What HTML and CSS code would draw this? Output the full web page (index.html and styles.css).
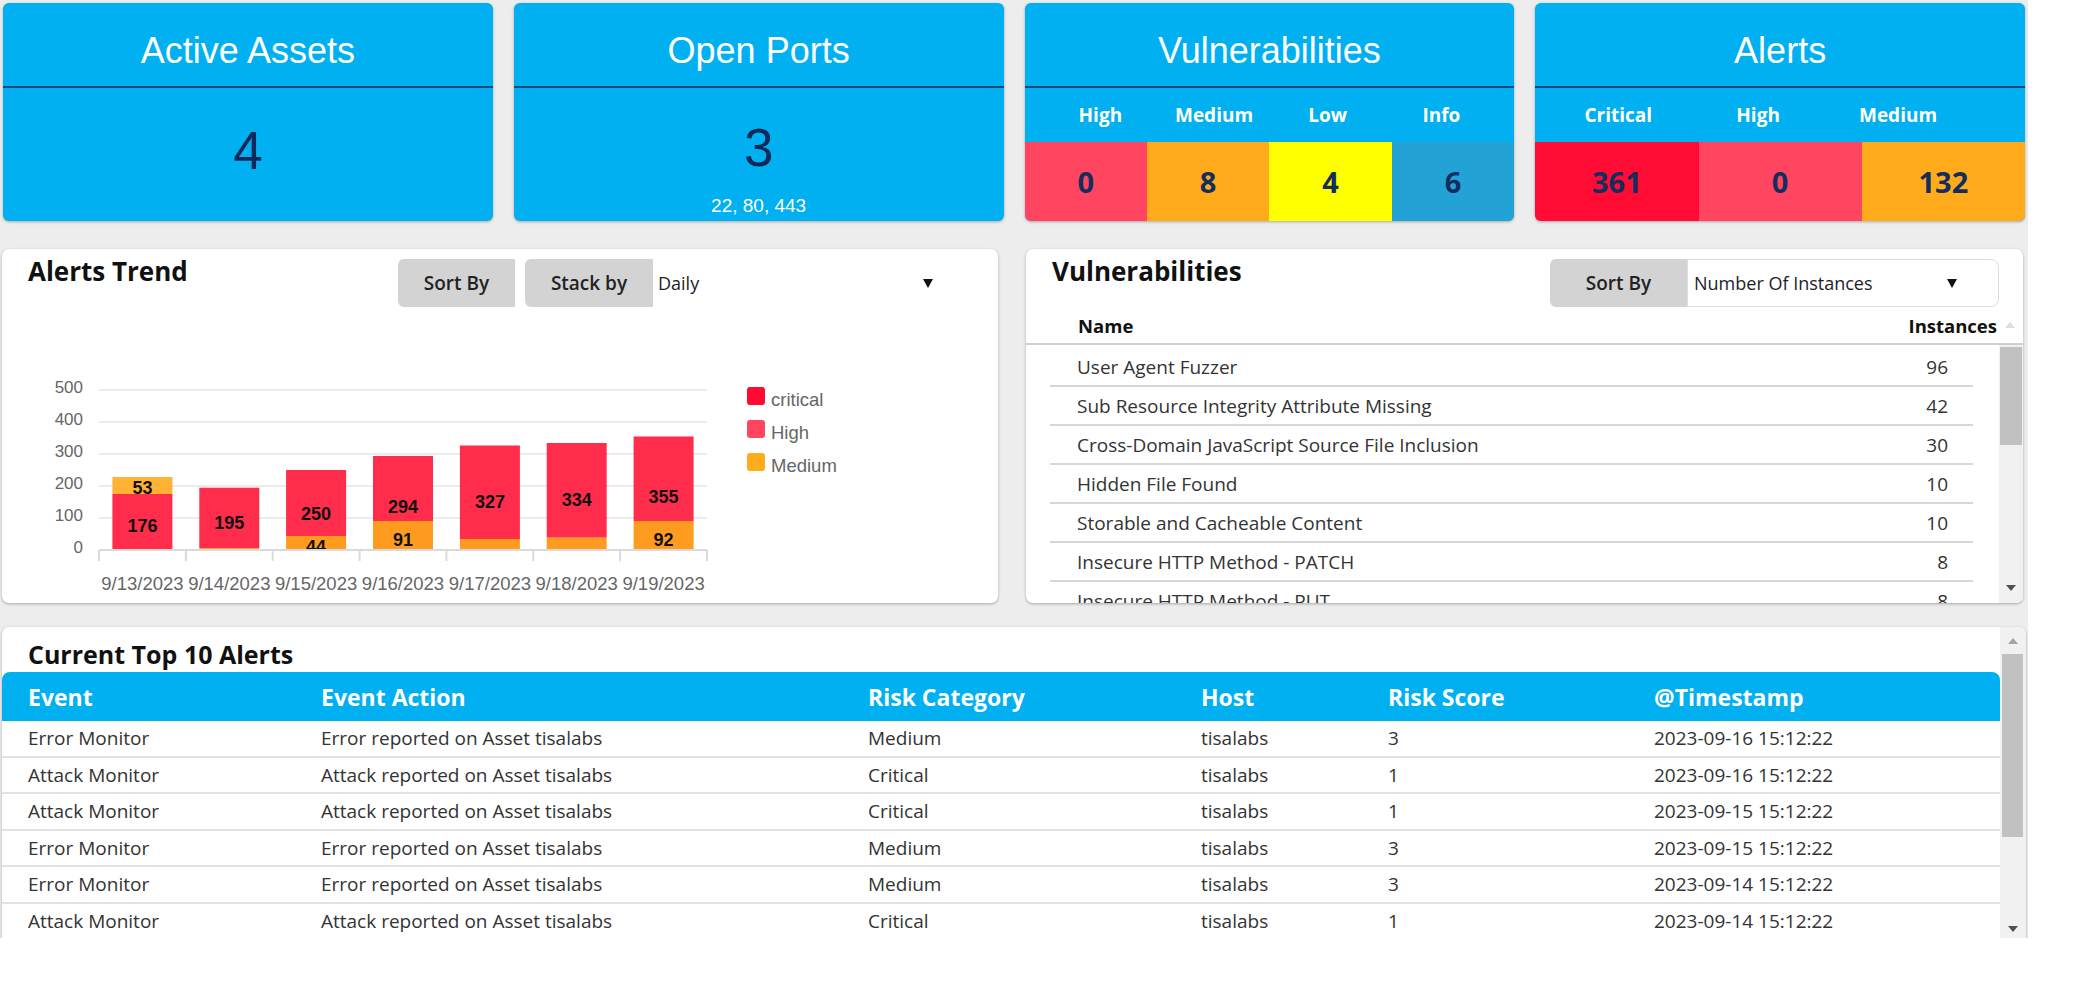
FILE: index.html
```html
<!DOCTYPE html>
<html>
<head>
<meta charset="utf-8">
<link rel="stylesheet" href="styles.css">
</head>
<body>
<div class="dash">
  <div class="cards">
    <div class="card">
      <div class="card-title">Active Assets</div>
      <div class="card-body body-assets"><div class="big">4</div></div>
    </div>
    <div class="card">
      <div class="card-title">Open Ports</div>
      <div class="card-body body-ports"><div class="big">3</div><div class="ports">22, 80, 443</div></div>
    </div>
    <div class="card">
      <div class="card-title">Vulnerabilities</div>
      <div class="sev-head four-h"><span>High</span><span>Medium</span><span>Low</span><span>Info</span></div>
      <div class="sev-cells four">
        <div class="c-high">0</div><div class="c-med">8</div><div class="c-low">4</div><div class="c-info">6</div>
      </div>
    </div>
    <div class="card">
      <div class="card-title">Alerts</div>
      <div class="sev-head three-h"><span>Critical</span><span>High</span><span>Medium</span></div>
      <div class="sev-cells three">
        <div class="c-crit">361</div><div class="c-high">0</div><div class="c-med">132</div>
      </div>
    </div>
  </div>

  <div class="mid">
    <section class="panel chart-panel">
      <div class="panel-head">
        <div class="panel-title">Alerts Trend</div>
        <div class="controls">
          <div class="btn btn-sort">Sort By</div>
          <div class="btn btn-stack">Stack by</div>
          <div class="select select-daily"><span>Daily</span><svg class="caret" width="10" height="9" viewBox="0 0 10 9"><polygon points="0,0 10,0 5,9"/></svg></div>
        </div>
      </div>
      <svg class="chart" width="996" height="296" viewBox="0 0 996 296">
        <defs><clipPath id="plot"><rect x="97" y="0" width="608" height="243"/></clipPath></defs>
        <g class="grid">
          <line x1="97" y1="83" x2="705" y2="83"/>
          <line x1="97" y1="115" x2="705" y2="115"/>
          <line x1="97" y1="147" x2="705" y2="147"/>
          <line x1="97" y1="179" x2="705" y2="179"/>
          <line x1="97" y1="211" x2="705" y2="211"/>
        </g>
        <g class="ylab">
          <text x="81" y="80">500</text>
          <text x="81" y="112">400</text>
          <text x="81" y="144">300</text>
          <text x="81" y="176">200</text>
          <text x="81" y="208">100</text>
          <text x="81" y="240">0</text>
        </g>
        <g clip-path="url(#plot)">
          <rect class="b-red" x="110.4" y="187" width="60" height="56"/>
          <rect class="b-org2" x="110.4" y="170" width="60" height="17"/>
          <rect class="b-red" x="197.3" y="180.7" width="60" height="60.3"/>
          <rect class="b-org" x="197.3" y="241" width="60" height="2"/>
          <rect class="b-red" x="284.1" y="163" width="60" height="66"/>
          <rect class="b-org" x="284.1" y="229" width="60" height="14"/>
          <rect class="b-red" x="371" y="149" width="60" height="65"/>
          <rect class="b-org" x="371" y="214" width="60" height="29"/>
          <rect class="b-red" x="457.9" y="138.5" width="60" height="93.5"/>
          <rect class="b-org" x="457.9" y="232" width="60" height="11"/>
          <rect class="b-red" x="544.7" y="136" width="60" height="94.7"/>
          <rect class="b-org" x="544.7" y="230.7" width="60" height="12.3"/>
          <rect class="b-red" x="631.6" y="129.5" width="60" height="84.5"/>
          <rect class="b-org" x="631.6" y="214" width="60" height="29"/>
          <g class="vlab">
            <text x="140.4" y="219">176</text>
            <text x="140.4" y="181">53</text>
            <text x="227.3" y="216">195</text>
            <text x="314.1" y="207">250</text>
            <text x="314.1" y="240">44</text>
            <text x="401" y="200">294</text>
            <text x="401" y="233">91</text>
            <text x="487.9" y="195">327</text>
            <text x="574.7" y="193">334</text>
            <text x="661.6" y="190">355</text>
            <text x="661.6" y="233">92</text>
          </g>
        </g>
        <g class="axis">
          <line x1="97" y1="243" x2="705" y2="243"/>
          <line x1="97" y1="243" x2="97" y2="254"/>
          <line x1="183.9" y1="243" x2="183.9" y2="254"/>
          <line x1="270.7" y1="243" x2="270.7" y2="254"/>
          <line x1="357.6" y1="243" x2="357.6" y2="254"/>
          <line x1="444.4" y1="243" x2="444.4" y2="254"/>
          <line x1="531.3" y1="243" x2="531.3" y2="254"/>
          <line x1="618.1" y1="243" x2="618.1" y2="254"/>
          <line x1="705" y1="243" x2="705" y2="254"/>
        </g>
        <g class="xlab">
          <text x="140.4" y="276">9/13/2023</text>
          <text x="227.3" y="276">9/14/2023</text>
          <text x="314.1" y="276">9/15/2023</text>
          <text x="401" y="276">9/16/2023</text>
          <text x="487.9" y="276">9/17/2023</text>
          <text x="574.7" y="276">9/18/2023</text>
          <text x="661.6" y="276">9/19/2023</text>
        </g>
        <g class="legend">
          <rect class="l-crit" x="745" y="80" width="18" height="18" rx="3"/>
          <text x="769" y="92">critical</text>
          <rect class="l-high" x="745" y="113" width="18" height="18" rx="3"/>
          <text x="769" y="125">High</text>
          <rect class="l-med" x="745" y="146" width="18" height="18" rx="3"/>
          <text x="769" y="158">Medium</text>
        </g>
      </svg>
    </section>

    <section class="panel vuln-panel">
      <div class="panel-head">
        <div class="panel-title">Vulnerabilities</div>
        <div class="controls">
          <div class="btn btn-vsort">Sort By</div>
          <div class="select select-inst"><span>Number Of Instances</span><svg class="caret" width="10" height="9" viewBox="0 0 10 9"><polygon points="0,0 10,0 5,9"/></svg></div>
        </div>
      </div>
      <div class="vt-head">
        <span class="vt-name">Name</span>
        <span class="vt-inst">Instances</span>
        <svg class="up-faint" width="14" height="8" viewBox="0 0 14 8"><polygon points="2,7 12,7 7,1"/></svg>
      </div>
      <div class="vt-body">
        <div class="vt-rows">
          <div class="vt-row"><span>User Agent Fuzzer</span><span>96</span></div>
          <div class="vt-row"><span>Sub Resource Integrity Attribute Missing</span><span>42</span></div>
          <div class="vt-row"><span>Cross-Domain JavaScript Source File Inclusion</span><span>30</span></div>
          <div class="vt-row"><span>Hidden File Found</span><span>10</span></div>
          <div class="vt-row"><span>Storable and Cacheable Content</span><span>10</span></div>
          <div class="vt-row"><span>Insecure HTTP Method - PATCH</span><span>8</span></div>
          <div class="vt-row"><span>Insecure HTTP Method - PUT</span><span>8</span></div>
        </div>
        <div class="vscroll">
          <div class="thumb thumb-v"></div>
          <div class="arr-down"><svg width="10" height="6" viewBox="0 0 10 6"><polygon points="0,0 10,0 5,6"/></svg></div>
        </div>
      </div>
    </section>
  </div>

  <section class="panel alerts-panel">
    <div class="ap-main">
      <div class="ap-title">Current Top 10 Alerts</div>
      <div class="ap-row ap-headrow">
        <div>Event</div><div>Event Action</div><div>Risk Category</div><div>Host</div><div>Risk Score</div><div>@Timestamp</div>
      </div>
      <div class="ap-row"><div>Error Monitor</div><div>Error reported on Asset tisalabs</div><div>Medium</div><div>tisalabs</div><div>3</div><div>2023-09-16 15:12:22</div></div>
      <div class="ap-row"><div>Attack Monitor</div><div>Attack reported on Asset tisalabs</div><div>Critical</div><div>tisalabs</div><div>1</div><div>2023-09-16 15:12:22</div></div>
      <div class="ap-row"><div>Attack Monitor</div><div>Attack reported on Asset tisalabs</div><div>Critical</div><div>tisalabs</div><div>1</div><div>2023-09-15 15:12:22</div></div>
      <div class="ap-row"><div>Error Monitor</div><div>Error reported on Asset tisalabs</div><div>Medium</div><div>tisalabs</div><div>3</div><div>2023-09-15 15:12:22</div></div>
      <div class="ap-row"><div>Error Monitor</div><div>Error reported on Asset tisalabs</div><div>Medium</div><div>tisalabs</div><div>3</div><div>2023-09-14 15:12:22</div></div>
      <div class="ap-row"><div>Attack Monitor</div><div>Attack reported on Asset tisalabs</div><div>Critical</div><div>tisalabs</div><div>1</div><div>2023-09-14 15:12:22</div></div>
    </div>
    <div class="ascroll">
      <div class="arr-up"><svg width="10" height="6" viewBox="0 0 10 6"><polygon points="0,6 10,6 5,0"/></svg></div>
      <div class="thumb thumb-a"></div>
      <div class="arr-down arr-down-a"><svg width="10" height="6" viewBox="0 0 10 6"><polygon points="0,0 10,0 5,6"/></svg></div>
    </div>
  </section>
</div>
</body>
</html>
```

FILE: styles.css
```css
body {
  margin: 0;
  background: #ffffff;
  font-family: "Open Sans", "Noto Sans", sans-serif;
}

.dash {
  width: 2028px;
  height: 938px;
  background: #ededed;
  overflow: hidden;
  padding-top: 3px;
  box-sizing: border-box;
}

/* ---------- top cards ---------- */
.cards {
  display: grid;
  grid-template-columns: repeat(4, 1fr);
  column-gap: 21px;
  margin-left: 3px;
  width: 2022px;
}

.card {
  background: #00b0f0;
  border-radius: 6px;
  height: 218px;
  overflow: hidden;
  box-shadow: 0 1px 3px rgba(0, 0, 0, 0.3);
  display: flex;
  flex-direction: column;
}

.card-title {
  height: 85px;
  box-sizing: border-box;
  padding-top: 26px;
  text-align: center;
  color: #ffffff;
  font-family: "Liberation Sans", Arial, sans-serif;
  font-size: 36px;
  line-height: 43px;
  border-bottom: 2px solid #16497c;
}

.card-body {
  display: flex;
  flex-direction: column;
  align-items: center;
}

.body-assets { padding-top: 36px; }
.body-ports { padding-top: 33px; }

.big {
  font-family: "Liberation Sans", Arial, sans-serif;
  font-size: 53px;
  line-height: 53px;
  color: #10295a;
}

.ports {
  margin-top: 22px;
  font-family: "Liberation Sans", Arial, sans-serif;
  font-size: 19px;
  line-height: 19px;
  color: #ffffff;
}

.sev-head {
  display: grid;
  height: 54px;
  align-items: center;
  text-align: center;
  color: #ffffff;
  font-weight: 700;
  font-size: 19px;
}

.four-h { grid-template-columns: repeat(4, 1fr); padding: 0 16px 0 19px; }
.three-h { grid-template-columns: repeat(3, 1fr); padding: 0 57px 0 13px; }

.sev-cells {
  display: grid;
  flex: 1;
}
.four { grid-template-columns: repeat(4, 1fr); }
.three { grid-template-columns: repeat(3, 1fr); }

.sev-cells div {
  display: flex;
  align-items: center;
  justify-content: center;
  font-weight: 700;
  font-size: 29px;
  color: #132d5e;
}

.c-high { background: #ff4560; }
.c-med { background: #ffab1b; }
.c-low { background: #ffff00; }
.c-info { background: #22a2d5; }
.c-crit { background: #ff0b33; }

/* ---------- middle panels ---------- */
.mid {
  display: grid;
  grid-template-columns: 996px 997px;
  column-gap: 28px;
  margin: 28px 0 0 2px;
}

.panel {
  background: #ffffff;
  border-radius: 7px;
  box-shadow: 0 1px 3px rgba(0, 0, 0, 0.3);
  overflow: hidden;
}

.chart-panel, .vuln-panel { height: 354px; }

.panel-head {
  display: flex;
  align-items: flex-start;
  height: 58px;
  padding-left: 26px;
}

.panel-title {
  font-weight: 700;
  font-size: 26px;
  line-height: 32px;
  color: #111111;
  margin-top: 6px;
}

.controls {
  display: flex;
  margin-left: auto;
  margin-top: 10px;
  height: 48px;
}

.chart-panel .controls { margin-right: 53px; }
.vuln-panel .controls { margin-right: 24px; }

.btn {
  background: #d3d3d3;
  border-radius: 6px 0 0 6px;
  display: flex;
  align-items: center;
  justify-content: center;
  font-weight: 600;
  font-size: 19px;
  color: #222222;
}

.btn-sort { width: 117px; margin-right: 10px; }
.btn-stack { width: 128px; }
.btn-vsort { width: 137px; }

.select {
  display: flex;
  align-items: center;
  justify-content: space-between;
  font-size: 18px;
  color: #1d1d2b;
  box-sizing: border-box;
}

.select-daily { width: 292px; padding: 0 12px 0 5px; }

.select-inst {
  width: 312px;
  padding: 0 41px 0 6px;
  border: 1px solid #dddddd;
  border-radius: 0 8px 8px 0;
}

.caret { fill: #111111; }

/* chart */
.chart { display: block; }
.grid line { stroke: #e4e4e4; stroke-width: 1.5; }
.axis line { stroke: #dadada; stroke-width: 2; }
.ylab text {
  font-family: "Liberation Sans", Arial, sans-serif;
  font-size: 17px;
  fill: #666666;
  text-anchor: end;
  dominant-baseline: central;
}
.xlab text {
  font-family: "Liberation Sans", Arial, sans-serif;
  font-size: 18.5px;
  fill: #666666;
  text-anchor: middle;
  dominant-baseline: central;
}
.vlab text {
  font-family: "Liberation Sans", Arial, sans-serif;
  font-size: 18px;
  font-weight: 700;
  fill: #111111;
  text-anchor: middle;
  dominant-baseline: central;
}
.b-red { fill: #ff2d4b; }
.b-org { fill: #ff9c20; }
.b-org2 { fill: #ffb233; }
.legend text {
  font-family: "Liberation Sans", Arial, sans-serif;
  font-size: 18.5px;
  fill: #666666;
  dominant-baseline: central;
}
.l-crit { fill: #ff0a32; }
.l-high { fill: #ff4560; }
.l-med { fill: #ffac1c; }

/* vulnerabilities table */
.vt-head {
  display: flex;
  align-items: center;
  height: 38px;
  box-sizing: border-box;
  border-bottom: 2px solid #cfcfcf;
  padding: 0 6px 0 52px;
  font-weight: 700;
  font-size: 18.5px;
  color: #111111;
}

.vt-name { flex: 1; }
.vt-inst { margin-right: 6px; }
.up-faint { fill: #dddddd; }

.vt-body {
  display: flex;
  height: 258px;
}

.vt-rows {
  flex: 1;
  padding: 3px 26px 0 24px;
  overflow: hidden;
}

.vt-row {
  height: 39px;
  box-sizing: border-box;
  border-bottom: 2px solid #d6d6d6;
  display: flex;
  align-items: center;
  justify-content: space-between;
  padding: 0 25px 0 27px;
  font-size: 19px;
  color: #333333;
}

.vscroll {
  width: 24px;
  background: #f1f1f1;
  display: flex;
  flex-direction: column;
  align-items: center;
}

.thumb { background: #c1c1c1; }
.thumb-v { width: 22px; height: 98px; margin-top: 2px; }

.arr-down {
  margin-top: auto;
  height: 30px;
  display: flex;
  align-items: center;
  justify-content: center;
  fill: #505050;
}

/* bottom alerts table */
.alerts-panel {
  margin: 24px 0 0 2px;
  width: 2024px;
  height: 311px;
  display: flex;
  border-radius: 7px 7px 0 0;
}

.ap-main {
  width: 1998px;
  overflow: hidden;
}

.ap-title {
  height: 45px;
  box-sizing: border-box;
  padding: 12px 0 0 26px;
  font-weight: 700;
  font-size: 25px;
  line-height: 30px;
  color: #111111;
}

.ap-row {
  display: grid;
  grid-template-columns: 293px 547px 333px 187px 266px 372px;
  height: 36.5px;
  box-sizing: border-box;
  border-bottom: 2px solid #e3e3e3;
  align-items: center;
  font-size: 19px;
  color: #333333;
}

.ap-row div { padding-left: 26px; white-space: nowrap; }

.ap-headrow {
  height: 49px;
  background: #00b0f0;
  border-bottom: none;
  border-radius: 8px 8px 0 0;
  color: #ffffff;
  font-weight: 700;
  font-size: 23px;
}

.ascroll {
  width: 26px;
  background: #f1f1f1;
  display: flex;
  flex-direction: column;
}

.arr-up {
  height: 27px;
  display: flex;
  align-items: center;
  justify-content: center;
  fill: #a3a3a3;
}

.thumb-a { width: 21px; height: 183px; margin-left: 2px; }

.arr-down-a { height: 18px; }
```
